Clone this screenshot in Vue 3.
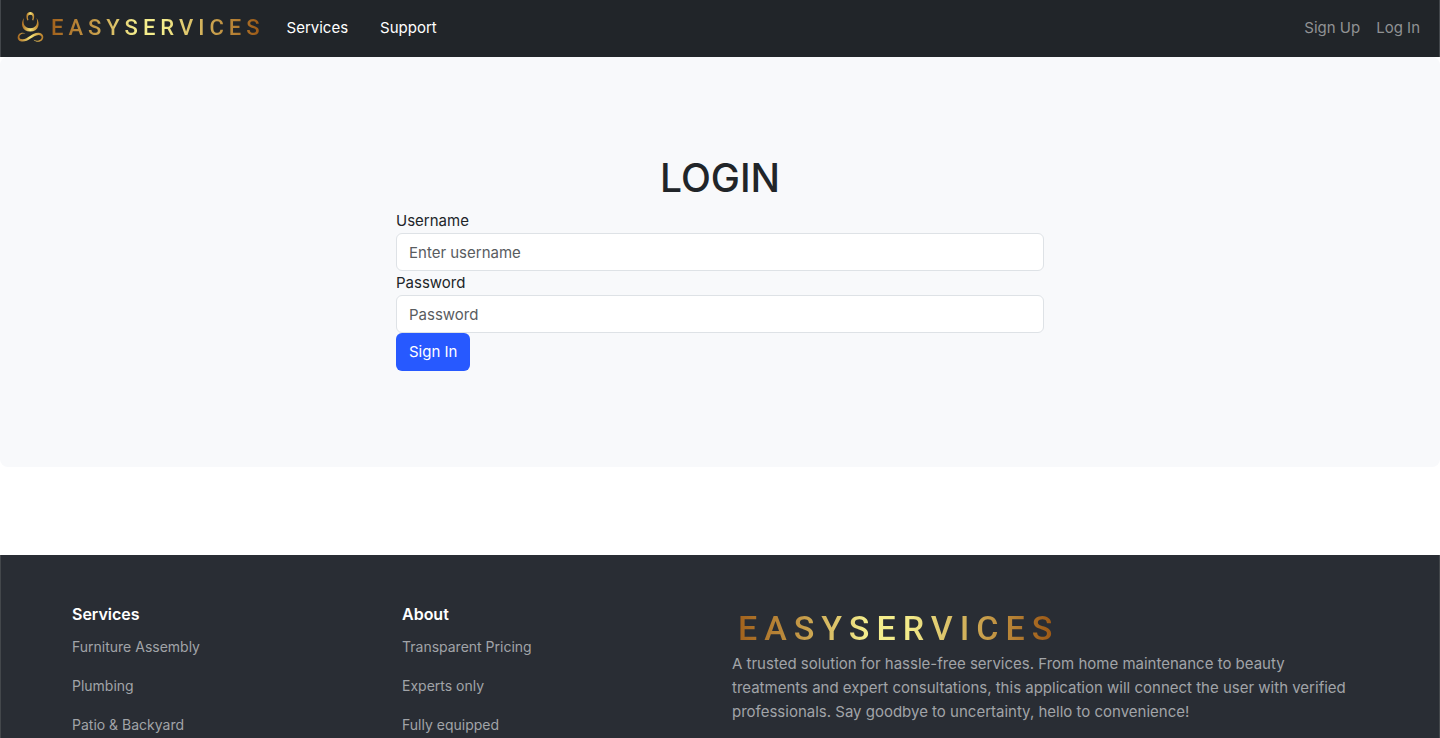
<script setup>
const topLinks = ['Services', 'Support']
const accountLinks = ['Sign Up', 'Log In']
const columns = [
  { title: 'Services', items: ['Furniture Assembly', 'Plumbing', 'Patio & Backyard'] },
  { title: 'About', items: ['Transparent Pricing', 'Experts only', 'Fully equipped'] }
]
</script>

<template>
  <div class="page">
    <header class="navbar">
      <a class="brand" href="#">
        <svg class="emblem" viewBox="0 0 28 32" aria-hidden="true">
          <defs>
            <linearGradient id="gold" x1="0" x2="1" y1="0" y2="0">
              <stop offset="0" stop-color="#a8681f" />
              <stop offset="0.5" stop-color="#f6e478" />
              <stop offset="1" stop-color="#b87c28" />
            </linearGradient>
          </defs>
          <g fill="url(#gold)">
            <path d="M10.300 8.500C8.300 4 9.500 0 13.300 0S18.300 4 16.300 8.500L15.200 8C16.300 4.500 15.500 2.800 13.300 2.800S10.300 4.500 11.400 8Z" />
            <path d="M7 6C2.800 11.500 5 19.500 13.300 19.500S23.800 11.500 19.600 6C21.300 12 18.500 16.300 13.300 16.300S5.300 12 7 6Z" />
            <path d="M8.500 21.500C6.500 20.300 3.500 20.500 1.800 22.300C-.3 24.800 .5 28.300 3.500 29.300C10.500 31 15 23.800 21.500 23C24.300 23 25.200 25 24.300 26.600C23 29 20 29.300 16.500 27.800C19 30.700 23.500 30.300 25.300 28C27.500 25 26 21 22 20.700C15 20.200 11.500 26.800 5.500 27.300C2.800 27.400 1.700 25.500 2.800 23.500C3.800 21.800 6 21.200 8.500 21.500Z" />
          </g>
        </svg>
        <span class="wordmark">EASYSERVICES</span>
      </a>
      <nav class="links">
        <a v-for="link in topLinks" :key="link" href="#">{{ link }}</a>
      </nav>
      <nav class="account">
        <a v-for="link in accountLinks" :key="link" href="#">{{ link }}</a>
      </nav>
    </header>

    <main class="panel">
      <form class="login" @submit.prevent>
        <h1>LOGIN</h1>
        <label for="username">Username</label>
        <input id="username" type="text" placeholder="Enter username" />
        <label for="password">Password</label>
        <input id="password" type="password" placeholder="Password" />
        <button type="submit">Sign In</button>
      </form>
    </main>

    <footer class="footer">
      <section v-for="column in columns" :key="column.title">
        <h2>{{ column.title }}</h2>
        <ul>
          <li v-for="item in column.items" :key="item"><a href="#">{{ item }}</a></li>
        </ul>
      </section>
      <section class="about">
        <div class="wordmark large">EASYSERVICES</div>
        <p>
          A trusted solution for hassle-free services. From home maintenance to beauty
          treatments and expert consultations, this application will connect the user with verified
          professionals. Say goodbye to uncertainty, hello to convenience!
        </p>
      </section>
    </footer>
  </div>
</template>

<style>
body {
  margin: 0;
  background: #fff;
}
</style>

<style scoped>
* {
  box-sizing: border-box;
}
.page {
  display: flex;
  flex-direction: column;
  min-height: 100vh;
  font-family: Inter, "Liberation Sans", sans-serif;
  font-size: 15px;
  line-height: 24px;
  color: #212529;
}
a {
  color: inherit;
  text-decoration: none;
}
.navbar {
  display: flex;
  align-items: center;
  height: 57px;
  padding: 0 19px 2px 16px;
  background: #212529;
  border: solid #43474b;
  border-width: 0 1px;
}
.brand {
  display: flex;
  align-items: center;
  gap: 6px;
}
.emblem {
  width: 28px;
  height: 32px;
}
.wordmark {
  font-family: Roboto, sans-serif;
  font-size: 22px;
  font-weight: 500;
  letter-spacing: 5px;
  background: linear-gradient(90deg, #a1611c, #c59a48 20%, #f4ed8c 40%, #f4ed8c 52%, #c59a48 78%, #9c5815 98%);
  background-clip: text;
  color: transparent;
}
.links {
  display: flex;
  gap: 32px;
  margin-left: 22px;
  color: #fff;
}
.account {
  display: flex;
  gap: 16px;
  margin-left: auto;
  color: #909294;
}
.panel {
  padding: 97px 24px 96px;
  background: #f8f9fb;
  border-radius: 8px;
}
.login {
  display: flex;
  flex-direction: column;
  max-width: 648px;
  margin: 0 auto;
}
h1 {
  margin: 0 0 7px;
  font-size: 39px;
  line-height: 48px;
  font-weight: 500;
  text-align: center;
}
input {
  width: 100%;
  height: 38px;
  padding: 6px 12px;
  border: 1px solid #dee2e6;
  border-radius: 6px;
  background: #fff;
  font: inherit;
  color: inherit;
}
input::placeholder {
  color: #595c5f;
  opacity: 1;
}
button {
  align-self: flex-start;
  height: 38px;
  padding: 0 13px;
  border: 0;
  border-radius: 6px;
  background: #2759ff;
  font: inherit;
  color: #fff;
}
.footer {
  display: grid;
  grid-template-columns: 1fr 1fr 2fr;
  flex: 1;
  margin-top: 88px;
  padding: 47px 59px 0;
  background: #292d34;
  border: solid #43474b;
  border-width: 0 1px;
}
.footer section {
  padding: 0 12px;
}
h2 {
  margin: 0 0 10px;
  font-size: 16px;
  line-height: 24px;
  font-weight: 600;
  color: #fff;
}
ul {
  display: grid;
  align-content: start;
  gap: 18px;
  margin: 0;
  padding: 0;
  list-style: none;
  font-size: 14px;
  line-height: 21px;
  color: #a1a4a8;
}
.large {
  width: fit-content;
  margin: 6px 0 4px 6px;
  font-size: 34px;
  line-height: 40px;
  letter-spacing: 7px;
}
p {
  max-width: 630px;
  margin: 0;
  color: #a1a4a8;
}
</style>
